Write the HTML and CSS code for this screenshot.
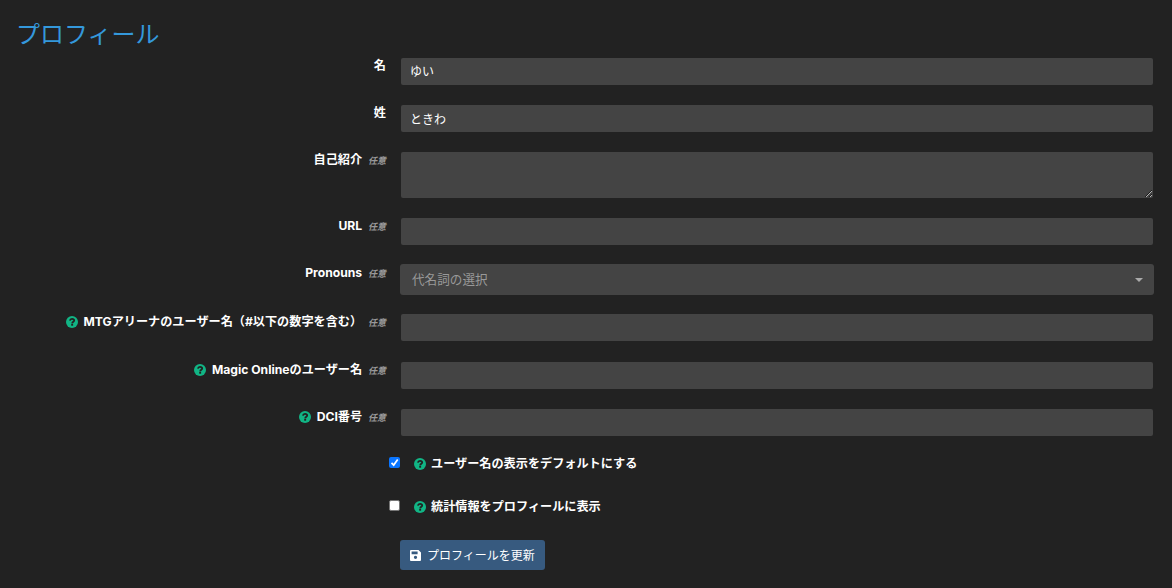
FILE: index.html
```html
<!DOCTYPE html>
<html lang="ja">

<head>
    <meta charset="UTF-8">
    <title>プロフィール</title>
    <link rel="stylesheet" href="styles.css">
</head>

<body>
    <!-- help icon, used next to several labels -->
    <svg class="sprite" width="0" height="0">
        <symbol id="help" viewBox="0 0 12 12">
            <circle cx="6" cy="6" r="6" fill="#11b585" />
            <path d="M3.900 4.700C4.100 3.400 4.900 2.900 6 2.900s2.200.6 2.200 1.700C8.200 5.800 6.200 5.800 6.200 7.400" fill="none" stroke="#222" stroke-width="1.800" />
            <rect x="5.200" y="8" width="1.900" height="1.700" fill="#222" />
        </symbol>
    </svg>

    <h1>プロフィール</h1>

    <form>
        <div class="form-row">
            <label for="first">名</label>
            <input type="text" class="field first" id="first" value="ゆい">
        </div>
        <div class="form-row">
            <label for="last">姓</label>
            <input type="text" class="field" id="last" value="ときわ">
        </div>
        <div class="form-row">
            <label for="bio">自己紹介 <small>任意</small></label>
            <textarea class="field" id="bio"></textarea>
        </div>
        <div class="form-row">
            <label for="url">URL <small>任意</small></label>
            <input type="text" class="field" id="url">
        </div>
        <div class="form-row select-row">
            <label>Pronouns <small>任意</small></label>
            <div class="select"><span>代名詞の選択</span><i class="caret"></i></div>
        </div>
        <div class="form-row arena-row">
            <label for="arena"><svg class="help"><use href="#help" /></svg>MTGアリーナのユーザー名（#以下の数字を含む） <small>任意</small></label>
            <input type="text" class="field" id="arena">
        </div>
        <div class="form-row">
            <label for="mtgo"><svg class="help"><use href="#help" /></svg>Magic Onlineのユーザー名 <small>任意</small></label>
            <input type="text" class="field" id="mtgo">
        </div>
        <div class="form-row">
            <label for="dci"><svg class="help"><use href="#help" /></svg>DCI番号 <small>任意</small></label>
            <input type="text" class="field" id="dci">
        </div>

        <label class="check-row">
            <input type="checkbox" checked>
            <span class="box"><svg viewBox="0 0 11 11"><path d="M2.500 5.800l2.200 2.300 4-5.700" /></svg></span>
            <svg class="help"><use href="#help" /></svg>ユーザー名の表示をデフォルトにする
        </label>
        <label class="check-row">
            <input type="checkbox">
            <span class="box"><svg viewBox="0 0 11 11"><path d="M2.500 5.800l2.200 2.300 4-5.700" /></svg></span>
            <svg class="help"><use href="#help" /></svg>統計情報をプロフィールに表示
        </label>

        <button type="button">
            <svg class="save" viewBox="0 0 11 11">
                <path fill-rule="evenodd" d="M1 0h7.500L11 2.500V10a1 1 0 0 1-1 1H1a1 1 0 0 1-1-1V1a1 1 0 0 1 1-1zM1.600 1.600v2.600h6V1.600zM5.500 5.700a1.600 1.600 0 1 0 0 3.300 1.600 1.600 0 0 0 0-3.300z" />
            </svg>
            <span>プロフィールを更新</span>
        </button>
    </form>
</body>

</html>
```

FILE: styles.css
```css
* {
    box-sizing: border-box;
}

body {
    margin: 0;
    padding: 16px 19px 0 16px;
    background: #222;
    color: #fff;
    font-family: Inter, "Noto Sans CJK JP", sans-serif;
    font-size: 12px;
}

.sprite {
    display: block;
}

h1 {
    margin: 0;
    height: 42px;
    line-height: 38px;
    font-size: 24px;
    font-weight: 400;
    color: #3498db;
}

/* label on the left, field on the right */
.form-row {
    display: grid;
    grid-template-columns: 370px 752px;
    column-gap: 15px;
    align-items: start;
    margin-bottom: 20px;
}

label {
    line-height: 15px;
    font-size: 12.15px;
    font-weight: 700;
    text-align: right;
    white-space: nowrap;
}

small {
    margin-left: 3px;
    font-size: 9px;
    font-style: italic;
    color: #999;
}

.help {
    width: 12px;
    height: 12px;
    margin-right: 6px;
    vertical-align: -2px;
}

.field {
    display: block;
    width: 100%;
    height: 27px;
    margin: 0;
    padding: 0 9px;
    border: 0;
    border-radius: 2px;
    background: #444;
    color: #fff;
    font: inherit;
}

.first {
    padding-bottom: 2px;
}

textarea.field {
    height: 46px;
    resize: vertical;
}

.select-row {
    margin: -1px 0 19px;
}

.select-row label {
    padding-top: 1px;
}

.select {
    display: flex;
    align-items: center;
    justify-content: space-between;
    height: 31px;
    margin: 0 -1px;
    padding: 0 11px 0 12px;
    border-radius: 3px;
    background: #444;
    color: #999;
    font-size: 12.6px;
}

.select span {
    padding-bottom: 2px;
}

.caret {
    border: 4px solid transparent;
    border-top-color: #aaa;
    border-bottom: 0;
}

.arena-row {
    margin-bottom: 21px;
}

.check-row {
    display: flex;
    align-items: center;
    height: 15px;
    margin: 0 0 28px 373px;
}

.check-row input {
    position: absolute;
    opacity: 0;
}

.check-row .help {
    margin-right: 5px;
}

.box {
    width: 11px;
    height: 11px;
    margin: -2px 14px 0 0;
    border: 1px solid #767676;
    border-radius: 2px;
    background: #fff;
}

.box svg {
    display: none;
    width: 11px;
    height: 11px;
}

.box path {
    fill: none;
    stroke: #fff;
    stroke-width: 1.7;
}

input:checked + .box {
    border: 0;
    background: #0a75ff;
}

input:checked + .box svg {
    display: block;
}

button {
    display: flex;
    align-items: center;
    width: 145px;
    height: 30px;
    margin: -2px 0 0 384px;
    padding: 0 10px;
    border: 0;
    border-radius: 3px;
    background: #375a7f;
    color: #fff;
    font: inherit;
    white-space: nowrap;
}

button span {
    padding-bottom: 2px;
}

.save {
    width: 11px;
    height: 11px;
    margin-right: 6px;
    fill: #fff;
}
```
